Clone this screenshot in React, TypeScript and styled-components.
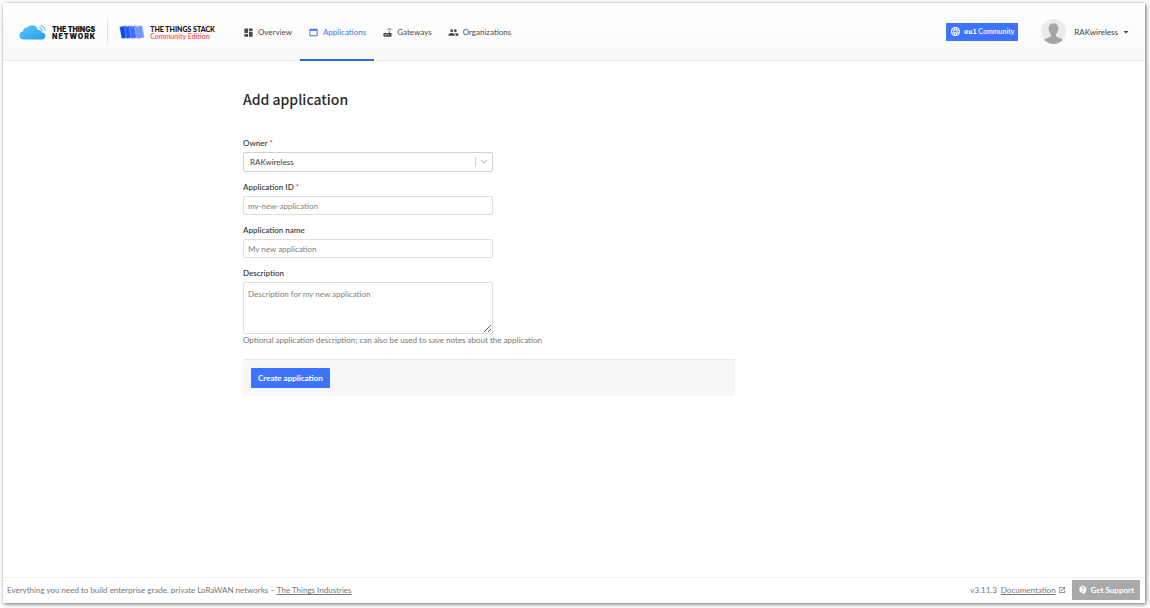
import React from "react";
import styled, { createGlobalStyle, css } from "styled-components";
import {
  MdArrowDropDown,
  MdContactSupport,
  MdDashboard,
  MdLanguage,
  MdLaunch,
  MdPeople,
  MdRouter,
  MdWebAsset,
} from "react-icons/md";

const fontStack = `Lato, "Noto Sans", sans-serif`;
const titleStack = `"Noto Sans CJK SC", "Noto Sans", sans-serif`;

const GlobalStyle = createGlobalStyle`
  *, *::before, *::after { box-sizing: border-box; }
  body {
    margin: 0;
    background: #fff;
    color: #414141;
    font-family: ${fontStack};
    font-size: 8px;
    line-height: 12px;
  }
  button, input, select, textarea { font: inherit; color: inherit; margin: 0; }
`;

const Frame = styled.div`
  display: flex;
  flex-direction: column;
  min-height: calc(100vh - 8px);
  margin: 3px 5px 5px 3px;
  background: #fff;
  box-shadow: 1px 1px 4px rgba(0, 0, 0, 0.6);
`;

const Header = styled.header`
  display: flex;
  align-items: center;
  height: 58px;
  padding: 0 13px 0 16px;
  border-bottom: 1px solid #ebebeb;
  background: linear-gradient(#fff, #f9f9f9);
`;

const Brand = styled.a`
  display: flex;
  align-items: center;
  gap: 5px;
  color: #111;
  text-decoration: none;
`;

const BrandText = styled.span<{ $family: string }>`
  display: flex;
  flex-direction: column;
  padding-top: 2px;
  font: 900 7px/7px ${(p) => p.$family}, sans-serif;
  white-space: nowrap;
`;

const Tracked = styled.span`
  letter-spacing: 1px;
`;

const Edition = styled.span`
  color: #ff4d5a;
  font-weight: 600;
`;

const BrandDivider = styled.span`
  width: 1px;
  height: 25px;
  margin: 0 11px;
  background: #e2e2e2;
`;

const Nav = styled.nav`
  display: flex;
  align-self: stretch;
  margin-left: 20px;
`;

const NavItem = styled.a<{ $active?: boolean }>`
  display: flex;
  align-items: center;
  gap: 4px;
  height: 58px;
  padding: 2px 8px 0;
  border-bottom: 2px solid transparent;
  color: #4a4a4a;
  text-decoration: none;
  ${(p) =>
    p.$active &&
    css`
      color: #3c72ff;
      border-bottom-color: #2f66e8;
    `}
`;

const HeaderRight = styled.div`
  display: flex;
  align-items: center;
  margin-left: auto;
`;

const Cluster = styled.button`
  display: flex;
  align-items: center;
  gap: 3px;
  height: 18px;
  padding: 0 4px;
  border: 0;
  border-radius: 1px;
  background: #3d74ff;
  color: #fff;
  font-size: 7px;
  font-weight: 600;
`;

const ClusterId = styled.b`
  font-family: "DejaVu Sans Mono", monospace;
`;

const Profile = styled.button`
  display: flex;
  align-items: center;
  gap: 8px;
  margin-left: 23px;
  padding: 0;
  border: 0;
  background: none;
`;

const ProfileName = styled.span`
  display: flex;
  align-items: center;
  gap: 2px;
`;

const Main = styled.main`
  flex: 1;
  width: 100%;
  max-width: 662px;
  margin: 0 auto;
  padding: 27px 0;
`;

const Title = styled.h1`
  margin: 0 0 27px;
  color: #2b2b2b;
  font-family: ${titleStack};
  font-size: 14px;
  font-weight: 500;
  line-height: 22px;
`;

const Form = styled.form`
  width: 100%;
  max-width: 492px;
`;

const Field = styled.div`
  display: flex;
  flex-direction: column;
  align-items: flex-start;
  margin-bottom: 9px;
`;

const Label = styled.label`
  margin-bottom: 3px;
  font-weight: 600;
`;

const Required = styled.span`
  margin-left: 2px;
  color: #ff2d2d;
`;

const control = css`
  width: 100%;
  max-width: 250px;
  border: 1px solid #dedede;
  border-radius: 2px;
  background: #fff;
  outline: 0;
`;

const TextInput = styled.input`
  ${control}
  height: 19px;
  padding: 0 4px;
  &::placeholder { color: #808080; opacity: 1; }
`;

const TextArea = styled.textarea`
  ${control}
  display: block;
  height: 52px;
  padding: 5px 4px;
  resize: vertical;
  &::placeholder { color: #808080; opacity: 1; }
`;

const SelectBox = styled.div`
  ${control}
  display: flex;
  align-items: center;
  height: 20px;
  border-color: #d2d2d2;
`;

const Select = styled.select`
  flex: 1;
  height: 18px;
  padding: 0 6px;
  border: 0;
  background: none;
  appearance: none;
  outline: 0;
`;

const Indicator = styled.span`
  display: flex;
  align-items: center;
  justify-content: center;
  width: 17px;
  height: 10px;
  border-left: 1px solid #d0d0d0;
`;

const Hint = styled.p`
  margin: 0;
  color: #757575;
`;

const SubmitBar = styled.div`
  margin-top: 13px;
  padding: 8px;
  border-top: 1px solid #e8e8e8;
  background: #f7f7f7;
`;

const Submit = styled.button`
  display: block;
  height: 20px;
  padding: 0 7px;
  border: 0;
  border-radius: 1px;
  background: #3d74ff;
  color: #fff;
  font-weight: 700;
`;

const Footer = styled.footer`
  display: flex;
  align-items: center;
  justify-content: space-between;
  height: 26px;
  padding: 0 5px 1px 4px;
  border-top: 1px solid #f0f0f0;
  color: #757575;
`;

const FooterGroup = styled.div`
  display: flex;
  align-items: center;
  gap: 4px;
`;

const DocumentationItem = styled.span`
  display: flex;
  align-items: center;
  gap: 2px;
`;

const FooterLink = styled.a`
  color: inherit;
  text-decoration: underline;
`;

const Support = styled.button`
  display: flex;
  align-items: center;
  gap: 3px;
  height: 20px;
  margin-left: 2px;
  padding: 0 6px;
  border: 0;
  border-radius: 1px;
  background: #a9a9a9;
  color: #fff;
  font-weight: 700;
`;

const CloudLogo = () => (
  <svg width="28" height="16" viewBox="0 0 28 16" aria-hidden="true">
    <defs>
      <linearGradient id="cloud" x1="0" y1="0" x2="1" y2="1">
        <stop offset="0" stopColor="#52cbfa" />
        <stop offset="1" stopColor="#2e9df2" />
      </linearGradient>
    </defs>
    <path
      fill="url(#cloud)"
      d="M5 15.500C2.200 15.500.5 13.700.5 11.400.5 9 2.200 7.600 4 7.500 4 5 6 3.200 8.200 3.500 9.300 1.900 11.100 1.200 13.200 1.200c3 0 5 1.900 5.500 4.600 2.500 0 4 1.200 4.300 2.800 2.300 0 3.500 1.300 3.500 3.200C26.500 14 25 15.500 22.800 15.500z"
    />
    <path
      d="M20.200 3.800c1.700.2 2.900 1.400 3.400 3.200M20.700 1.500c2.800.2 5 2.400 5.500 5.300"
      fill="none"
      stroke="#5cc3f8"
      strokeWidth="1.100"
    />
  </svg>
);

const StackLogo = () => (
  <svg width="26" height="16" viewBox="0 0 26 16" aria-hidden="true">
    <g stroke="#dfe7ff" strokeWidth=".35">
      <path fill="#1048f0" d="M.5 2.800 7.500 1.400 9.700 13.400 2.600 14.800z" />
      <path fill="#2459fb" d="M5.400 2.800 12.400 1.400 14.600 13.400 7.500 14.800z" />
      <path fill="#3f6fff" d="M10.300 2.800 17.300 1.400 19.500 13.400 12.400 14.800z" />
      <path fill="#7395ff" d="M15.400 2.800 23 1.400 25.400 13.400 17.800 14.800z" />
    </g>
  </svg>
);

const Avatar = () => (
  <svg width="25" height="25" viewBox="0 0 25 25" aria-hidden="true">
    <defs>
      <clipPath id="avatar">
        <circle cx="12.500" cy="12.500" r="12.500" />
      </clipPath>
    </defs>
    <g clipPath="url(#avatar)">
      <path fill="#ebebeb" d="M0 0h25v25H0z" />
      <path
        fill="#a5a5a5"
        d="M12.500 4.300c3 0 4.900 2 4.900 5 0 2.400-.9 4.400-2.300 5.600v2.300c1.500 1.500 5.300 1.700 7.400 4.300V25h-20v-3.500c2.100-2.600 5.900-2.800 7.400-4.300v-2.300C8.500 13.700 7.600 11.700 7.600 9.300c0-3 1.900-5 4.900-5z"
      />
    </g>
  </svg>
);

const Chevron = () => (
  <svg width="8" height="6" viewBox="0 0 8 6" aria-hidden="true">
    <path d="m1 1.200 3 3 3-3" fill="none" stroke="#c4c4c4" strokeWidth="1.200" />
  </svg>
);

const navigation = [
  { label: "Overview", Icon: MdDashboard },
  { label: "Applications", Icon: MdWebAsset, active: true },
  { label: "Gateways", Icon: MdRouter },
  { label: "Organizations", Icon: MdPeople },
];

export default function App() {
  return (
    <>
      <GlobalStyle />
      <Frame>
        <Header>
          <Brand href="#network">
            <CloudLogo />
            <BrandText $family="Inter">
              <span>THE THINGS</span>
              <Tracked>NETWORK</Tracked>
            </BrandText>
          </Brand>
          <BrandDivider />
          <Brand href="#stack">
            <StackLogo />
            <BrandText $family="Lato">
              <span>THE THINGS STACK</span>
              <Edition>Community Edition</Edition>
            </BrandText>
          </Brand>
          <Nav>
            {navigation.map(({ label, Icon, active }) => (
              <NavItem key={label} href={"#" + label.toLowerCase()} $active={active}>
                <Icon size={11} />
                {label}
              </NavItem>
            ))}
          </Nav>
          <HeaderRight>
            <Cluster type="button">
              <MdLanguage size={11} />
              <span>
                <ClusterId>eu1</ClusterId> Community
              </span>
            </Cluster>
            <Profile type="button">
              <Avatar />
              <ProfileName>
                RAKwireless
                <MdArrowDropDown size={12} />
              </ProfileName>
            </Profile>
          </HeaderRight>
        </Header>

        <Main>
          <Title>Add application</Title>
          <Form>
            <Field>
              <Label htmlFor="owner">
                Owner<Required>*</Required>
              </Label>
              <SelectBox>
                <Select id="owner" defaultValue="RAKwireless">
                  <option>RAKwireless</option>
                </Select>
                <Indicator>
                  <Chevron />
                </Indicator>
              </SelectBox>
            </Field>
            <Field>
              <Label htmlFor="app-id">
                Application ID<Required>*</Required>
              </Label>
              <TextInput id="app-id" placeholder="my-new-application" />
            </Field>
            <Field>
              <Label htmlFor="app-name">Application name</Label>
              <TextInput id="app-name" placeholder="My new application" />
            </Field>
            <Field>
              <Label htmlFor="description">Description</Label>
              <TextArea id="description" placeholder="Description for my new application" />
              <Hint>Optional application description; can also be used to save notes about the application</Hint>
            </Field>
            <SubmitBar>
              <Submit type="button">Create application</Submit>
            </SubmitBar>
          </Form>
        </Main>

        <Footer>
          <span>
            Everything you need to build enterprise grade, private LoRaWAN networks –{" "}
            <FooterLink href="#industries">The Things Industries</FooterLink>
          </span>
          <FooterGroup>
            <span>v3.11.3</span>
            <DocumentationItem>
              <FooterLink href="#documentation">Documentation</FooterLink>
              <MdLaunch size={8} />
            </DocumentationItem>
            <Support type="button">
              <MdContactSupport size={10} />
              Get Support
            </Support>
          </FooterGroup>
        </Footer>
      </Frame>
    </>
  );
}
